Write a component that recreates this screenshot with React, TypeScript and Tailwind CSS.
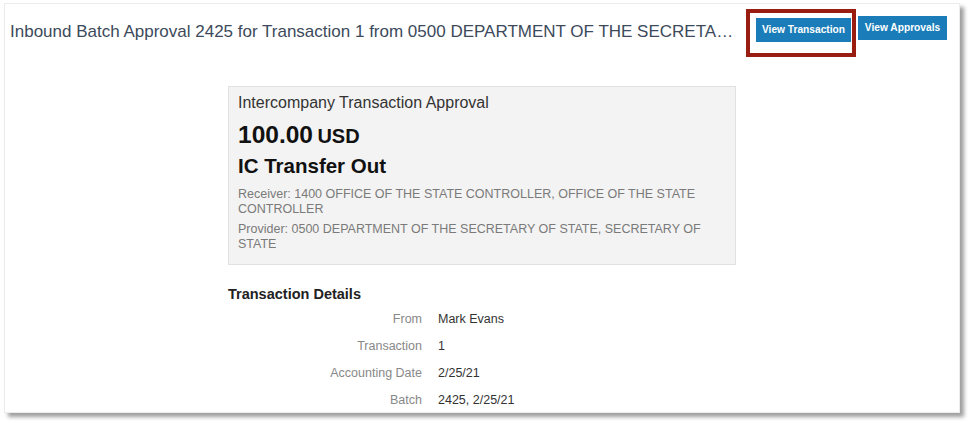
const rows = [
  { label: 'From', value: 'Mark Evans' },
  { label: 'Transaction', value: '1' },
  { label: 'Accounting Date', value: '2/25/21' },
  { label: 'Batch', value: '2425, 2/25/21' },
]

export default function App() {
  return (
    <div className="w-[972px] h-[426px] bg-white pt-[3px] pl-[4px] font-['Liberation_Sans',Arial,sans-serif]">
      <div className="w-[956px] h-[410px] bg-white border border-[#ececec] shadow-[4px_4px_4px_rgba(0,0,0,0.38)] overflow-hidden">
        {/* header */}
        <div className="flex items-start pt-[12px] pl-[5px] pr-[12px]">
          <h1 className="flex-1 min-w-0 mt-[6px] truncate text-[17px] leading-[20px] text-[#3c4a5b]">
            Inbound Batch Approval 2425 for Transaction 1 from 0500 DEPARTMENT OF THE SECRETA…
          </h1>
          <div className="flex gap-[7px] ml-[20px]">
            <div className="relative">
              <button className="w-[95px] h-[24px] bg-[#1a7db9] text-white text-[10.2px] font-bold">
                View Transaction
              </button>
              <div className="absolute left-[-10px] top-[-7px] w-[110px] h-[48px] border-[4px] border-[#9a1d12] pointer-events-none" />
            </div>
            <button className="w-[89px] h-[24px] bg-[#1a7db9] text-white text-[10.2px] font-bold">
              View Approvals
            </button>
          </div>
        </div>

        {/* body */}
        <div className="w-[508px] mx-auto mt-[44px]">
          <div className="bg-[#f3f3f3] border border-[#e1e1e1] pt-[7px] pb-[12px] px-[9px]">
            <div className="text-[16px] leading-[18px] text-[#333]">Intercompany Transaction Approval</div>
            <div className="mt-[9px] font-bold text-[#111] leading-[28px]">
              <span className="text-[24.5px]">100.00</span> <span className="text-[20px]">USD</span>
            </div>
            <div className="mt-[2px] text-[20.5px] leading-[24px] font-bold text-[#111]">IC Transfer Out</div>
            <div className="mt-[9px] text-[12.5px] leading-[15px] text-[#7a7a7a]">
              Receiver: 1400 OFFICE OF THE STATE CONTROLLER, OFFICE OF THE STATE CONTROLLER
            </div>
            <div className="mt-[5px] text-[12.5px] leading-[15px] text-[#7a7a7a]">
              Provider: 0500 DEPARTMENT OF THE SECRETARY OF STATE, SECRETARY OF STATE
            </div>
          </div>

          <div className="mt-[21px] text-[14.5px] leading-[17px] font-bold text-[#222]">Transaction Details</div>
          <div className="mt-[3px]">
            {rows.map((r) => (
              <div key={r.label} className="flex h-[27px] items-center text-[12.5px]">
                <div className="w-[194px] text-right text-[#888]">{r.label}</div>
                <div className="ml-[16px] text-[#333]">{r.value}</div>
              </div>
            ))}
          </div>
        </div>
      </div>
    </div>
  )
}
